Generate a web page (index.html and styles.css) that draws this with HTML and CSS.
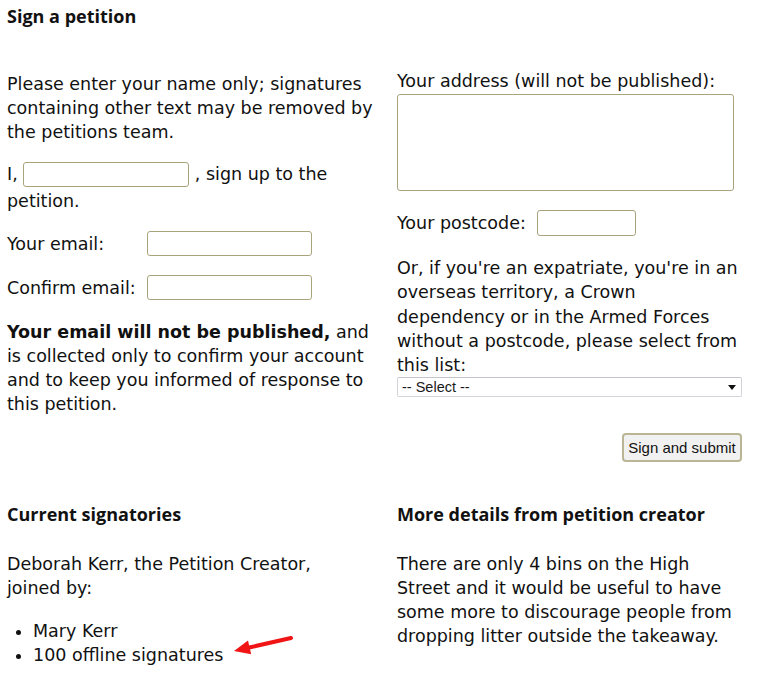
FILE: index.html
```html
<!DOCTYPE html>
<html lang="en">
<head>
<meta charset="utf-8">
<title>Sign a petition</title>
<link rel="stylesheet" href="styles.css">
</head>
<body>
<div class="page">
  <section class="cols top">
    <div class="col left">
      <h2 class="heading">Sign a petition</h2>
      <p class="intro">Please enter your name only; signatures containing other text may be removed by the petitions team.</p>
      <p class="name-line">I, <input class="field name" type="text"> , sign up to the petition.</p>
      <div class="row">
        <label class="row-label">Your email:</label>
        <input class="field email" type="text">
      </div>
      <div class="row row-2">
        <label class="row-label">Confirm email:</label>
        <input class="field email" type="text">
      </div>
      <p class="notice"><strong>Your email will not be published,</strong> and is collected only to confirm your account and to keep you informed of response to this petition.</p>
    </div>
    <div class="col right">
      <label class="addr-label">Your address (will not be published):</label>
      <textarea class="field address"></textarea>
      <div class="postcode-row">
        <label>Your postcode:</label>
        <input class="field postcode" type="text">
      </div>
      <p class="expat">Or, if you're an expatriate, you're in an overseas territory, a Crown dependency or in the Armed Forces without a postcode, please select from this list:</p>
      <div class="select-wrap">
        <select class="country"><option>-- Select --</option></select>
      </div>
      <div class="actions">
        <button class="submit" type="button">Sign and submit</button>
      </div>
    </div>
  </section>
  <section class="cols bottom">
    <div class="col left">
      <h2 class="heading">Current signatories</h2>
      <p class="para creator">Deborah Kerr, the Petition Creator, joined by:</p>
      <ul class="signers">
        <li>Mary Kerr</li>
        <li class="offline">100 offline signatures
          <svg class="arrow" width="66" height="28" viewBox="0 0 66 28" aria-hidden="true">
            <line x1="61" y1="7" x2="17" y2="17" stroke="#f01414" stroke-width="4" stroke-linecap="round"/>
            <polygon points="4,20 18,9.6 21.2,23.2" fill="#f01414"/>
          </svg>
        </li>
      </ul>
    </div>
    <div class="col right">
      <h2 class="heading">More details from petition creator</h2>
      <p class="para">There are only 4 bins on the High Street and it would be useful to have some more to discourage people from dropping litter outside the takeaway.</p>
    </div>
  </section>
</div>
</body>
</html>
```

FILE: styles.css
```css
html, body {
  margin: 0;
  padding: 0;
  background: #ffffff;
}

body {
  font-family: "DejaVu Sans", Verdana, sans-serif;
  font-size: 17.5px;
  line-height: 24px;
  color: #111111;
}

.page {
  padding: 0 7px;
}

.cols {
  display: grid;
  grid-template-columns: 390px 345px;
}

.heading {
  font-family: "Open Sans", "DejaVu Sans", sans-serif;
  font-weight: 700;
  font-size: 18px;
  line-height: 22px;
  margin: 0;
  color: #111111;
}

.top .heading {
  margin-top: 5px;
}

p {
  margin: 0;
}

.intro {
  margin-top: 45px;
  padding-right: 12px;
}

.name-line {
  margin-top: 17px;
}

.field {
  border: 1px solid #a9a47c;
  border-radius: 3px;
  background: #ffffff;
  box-sizing: border-box;
  padding: 0 4px;
  font: inherit;
  outline: none;
}

.name {
  width: 166px;
  height: 25px;
  vertical-align: middle;
  margin: 1px 0 2px 0;
}

.row {
  display: flex;
  align-items: center;
  margin-top: 18px;
}

.row-2 {
  margin-top: 19px;
}

.row-label {
  width: 140px;
}

.email {
  width: 165px;
  height: 25px;
}

.notice {
  margin-top: 20px;
  padding-right: 15px;
}

.notice strong {
  font-weight: 700;
}

.right {
  display: flex;
  flex-direction: column;
  align-items: flex-start;
}

.addr-label {
  margin-top: 69px;
  display: block;
}

.address {
  width: 337px;
  height: 97px;
  margin-top: 1px;
  resize: none;
}

.postcode-row {
  display: flex;
  align-items: center;
  gap: 11px;
  margin-top: 19px;
}

.postcode {
  width: 99px;
  height: 26px;
}

.expat {
  margin-top: 20px;
  line-height: 24.3px;
}

.select-wrap {
  position: relative;
  width: 345px;
  height: 20px;
}

.select-wrap::after {
  content: "";
  position: absolute;
  right: 6px;
  top: 8px;
  border-left: 4px solid transparent;
  border-right: 4px solid transparent;
  border-top: 5px solid #111111;
  pointer-events: none;
}

.country {
  -webkit-appearance: none;
  appearance: none;
  display: block;
  width: 345px;
  height: 20px;
  margin: 0;
  font-family: "Liberation Sans", Arial, sans-serif;
  font-size: 14.5px;
  line-height: 18px;
  color: #1a1a1a;
  border: 1px solid #d3d3da;
  border-top-color: #c4c4cc;
  border-radius: 2px;
  background: #ffffff;
  padding: 0 4px;
}

.actions {
  align-self: stretch;
  display: flex;
  justify-content: flex-end;
  margin-top: 36px;
}

.submit {
  width: 120px;
  height: 29px;
  font-family: "Liberation Sans", Arial, sans-serif;
  font-size: 15px;
  color: #111111;
  background: #f1f1f1;
  border: 2px solid #b9b595;
  border-radius: 4px;
  padding: 0;
}

.bottom {
  margin-top: 41px;
}

.para {
  margin-top: 27px;
}

.creator {
  padding-right: 40px;
}

.signers {
  margin: 19px 0 0 0;
  padding-left: 26px;
}

.signers li {
  line-height: 24px;
}

.offline {
  position: relative;
}

.arrow {
  position: absolute;
  left: 197px;
  top: -12px;
}
```
